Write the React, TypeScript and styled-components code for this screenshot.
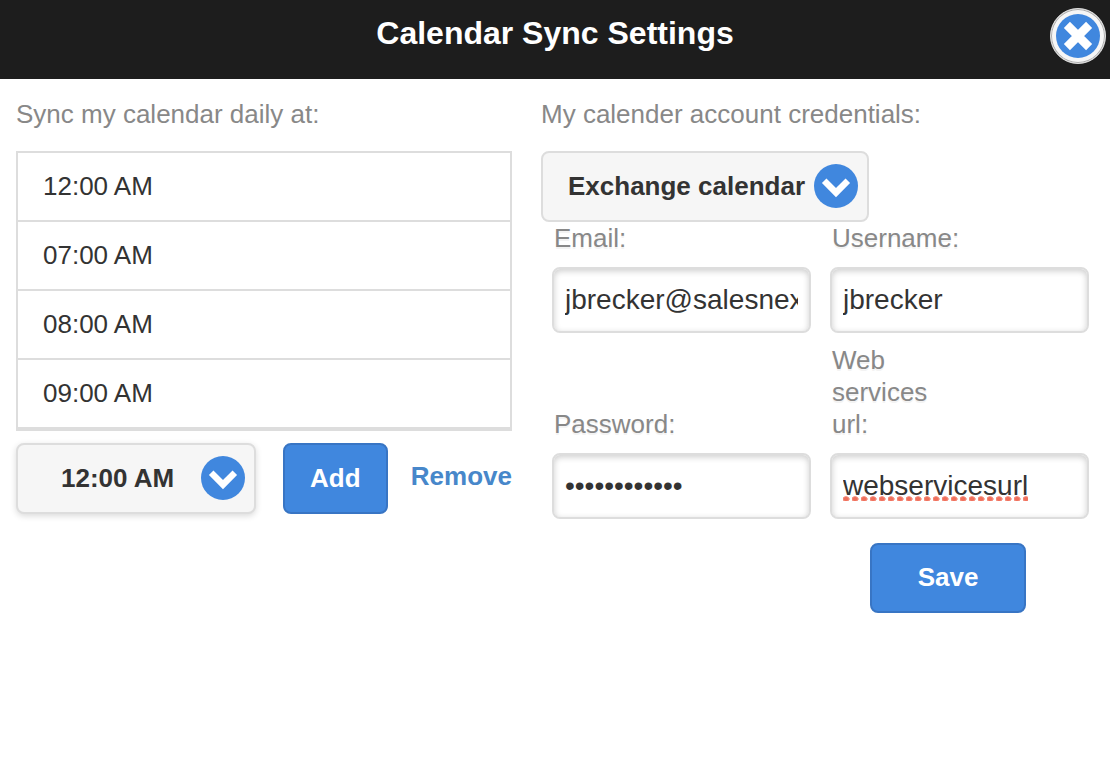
import React, { useState } from "react";
import styled, { createGlobalStyle } from "styled-components";

const GlobalStyle = createGlobalStyle`
  *, *::before, *::after { box-sizing: border-box; }
  body {
    margin: 0;
    background: #fff;
    color: #333;
    font-family: "Liberation Sans", Helvetica, Arial, sans-serif;
    font-size: 26px;
    line-height: 32px;
  }
  button, input, select { font: inherit; color: inherit; margin: 0; }
`;

const Header = styled.header`
  display: grid;
  grid-template-columns: 1fr auto 1fr;
  align-items: start;
  padding: 8px 4px 15px;
  background: #1d1d1d;
`;

const Title = styled.h1`
  grid-column: 2;
  margin: 0;
  padding-top: 5px;
  color: #fff;
  font-size: 32px;
  line-height: 40px;
  font-weight: bold;
`;

const CloseButton = styled.button`
  justify-self: end;
  width: 56px;
  height: 56px;
  padding: 4px;
  border: 1px solid #ddd;
  border-radius: 50%;
  background: #f6f6f6;
  box-shadow: inset 0 0 0 1px #aaa;
  cursor: pointer;

  svg { display: block; margin: 0 auto; }
`;

const Columns = styled.main`
  display: grid;
  grid-template-columns: minmax(0, 496fr) minmax(0, 548fr);
  column-gap: 29px;
  padding: 19px 21px 24px 16px;
`;

const Column = styled.section`
  min-width: 0;
`;

const ColumnTitle = styled.h2`
  margin: 0 0 21px;
  color: #888;
  font-size: 26px;
  line-height: 32px;
  font-weight: normal;
`;

const TimeList = styled.ul`
  margin: 0;
  padding: 0;
  list-style: none;
  border: 2px solid #ddd;
  border-top: 0;
`;

const TimeItem = styled.li`
  border-top: 2px solid #ddd;

  &:last-child { border-bottom: 2px solid #ddd; }
`;

const TimeButton = styled.button`
  display: block;
  width: 100%;
  height: 67px;
  padding: 0 25px 2px;
  border: 0;
  background: #fff;
  text-align: left;
  cursor: pointer;
`;

const Actions = styled.div`
  display: flex;
  align-items: center;
  margin-top: 12px;
`;

const SelectBox = styled.div<{ $width: number }>`
  position: relative;
  width: ${(p) => p.$width}px;
  max-width: 100%;

  svg {
    position: absolute;
    top: 13px;
    right: 11px;
    pointer-events: none;
  }
`;

const Select = styled.select<{ $indent: number; $raised?: boolean }>`
  display: block;
  appearance: none;
  width: 100%;
  height: 71px;
  padding: 0 56px 2px ${(p) => p.$indent}px;
  border: 2px solid #ddd;
  border-radius: 8px;
  background: #f6f6f6;
  box-shadow: ${(p) => (p.$raised ? "0 2px 6px rgba(0, 0, 0, 0.15)" : "none")};
  font-weight: bold;
`;

const PrimaryButton = styled.button`
  height: 71px;
  padding: 0 25px 2px;
  border: 2px solid #3875c4;
  border-radius: 8px;
  background: #4087de;
  color: #fff;
  font-weight: bold;
  cursor: pointer;
`;

const AddButton = styled(PrimaryButton)`
  margin-left: 27px;
`;

const SaveButton = styled(PrimaryButton)`
  height: 70px;
  width: 156px;
  margin: 24px 0 0 40px;
`;

const RemoveLink = styled.a`
  margin-left: auto;
  padding-bottom: 6px;
  color: #4787ca;
  font-weight: bold;
  text-decoration: none;
`;

const Form = styled.form`
  display: grid;
  grid-template-columns: repeat(2, minmax(0, 1fr));
  column-gap: 19px;
  padding-left: 11px;
`;

const Field = styled.div`
  display: flex;
  flex-direction: column;
  justify-content: flex-end;
  margin-bottom: 11px;

  &:nth-of-type(n + 3) { margin-bottom: 0; }
`;

const Label = styled.label`
  max-width: 120px;
  margin-bottom: 13px;
  padding-left: 2px;
  color: #888;
  text-shadow: 0 2px 0 #f3f3f3;
`;

const InputBox = styled.div<{ $misspelled?: boolean }>`
  position: relative;

  &::after {
    content: ${(p) => (p.$misspelled ? '""' : "none")};
    position: absolute;
    left: 13px;
    top: 43px;
    width: 185px;
    height: 5px;
    background: radial-gradient(ellipse 4px 3px at 3px 3px, #f0705c 0 50%, #f6a497 85%, transparent 100%) 0 0 / 9px 5px repeat-x;
    pointer-events: none;
  }
`;

const Input = styled.input`
  display: block;
  width: 100%;
  height: 66px;
  padding: 0 11px;
  border: 2px solid #ddd;
  border-radius: 8px;
  background: #fff;
  box-shadow: inset 0 2px 6px rgba(0, 0, 0, 0.2);
  font-size: 28px;
`;

const Chevron = () => (
  <svg width="44" height="44" viewBox="0 0 44 44" aria-hidden="true">
    <circle cx="22" cy="22" r="22" fill="#4087de" />
    <path d="M10.2 16.8 22 28.6 33.8 16.8" fill="none" stroke="#fff" strokeWidth="6.4" />
  </svg>
);

const Cross = () => (
  <svg width="44" height="44" viewBox="0 0 44 44" aria-hidden="true">
    <circle cx="22" cy="22" r="22" fill="#4087de" />
    <path d="M10.9 10.9 33.1 33.1M33.1 10.9 10.9 33.1" fill="none" stroke="#fff" strokeWidth="8.6" />
  </svg>
);

const TIMES = ["12:00 AM", "07:00 AM", "08:00 AM", "09:00 AM"];

const FIELDS = [
  { id: "email", label: "Email:", value: "jbrecker@salesnexus.com", type: "text" },
  { id: "username", label: "Username:", value: "jbrecker", type: "text" },
  { id: "password", label: "Password:", value: "abcdefghijkl", type: "password" },
  { id: "url", label: "Web services url:", value: "webservicesurl", type: "text", misspelled: true },
];

export default function App() {
  const [times, setTimes] = useState(TIMES);
  const [selected, setSelected] = useState<string | null>(null);
  const [time, setTime] = useState("12:00 AM");

  return (
    <>
      <GlobalStyle />
      <Header>
        <Title>Calendar Sync Settings</Title>
        <CloseButton type="button" aria-label="Close">
          <Cross />
        </CloseButton>
      </Header>
      <Columns>
        <Column>
          <ColumnTitle>Sync my calendar daily at:</ColumnTitle>
          <TimeList>
            {times.map((t) => (
              <TimeItem key={t}>
                <TimeButton type="button" aria-pressed={selected === t} onClick={() => setSelected(t)}>
                  {t}
                </TimeButton>
              </TimeItem>
            ))}
          </TimeList>
          <Actions>
            <SelectBox $width={240}>
              <Select
                $indent={43}
                $raised
                aria-label="Sync time"
                value={time}
                onChange={(e) => setTime(e.target.value)}
              >
                {TIMES.map((t) => (
                  <option key={t}>{t}</option>
                ))}
              </Select>
              <Chevron />
            </SelectBox>
            <AddButton
              type="button"
              onClick={() => setTimes((list) => (list.includes(time) ? list : [...list, time]))}
            >
              Add
            </AddButton>
            <RemoveLink
              href="#remove"
              onClick={(e) => {
                e.preventDefault();
                setTimes((list) => list.filter((t) => t !== selected));
              }}
            >
              Remove
            </RemoveLink>
          </Actions>
        </Column>
        <Column>
          <ColumnTitle>
            <label htmlFor="account">My calender account credentials:</label>
          </ColumnTitle>
          <SelectBox $width={328}>
            <Select id="account" $indent={25}>
              <option>Exchange calendar</option>
            </Select>
            <Chevron />
          </SelectBox>
          <Form onSubmit={(e) => e.preventDefault()}>
            {FIELDS.map((f) => (
              <Field key={f.id}>
                <Label htmlFor={f.id}>{f.label}</Label>
                <InputBox $misspelled={f.misspelled}>
                  <Input id={f.id} type={f.type} defaultValue={f.value} autoComplete="off" />
                </InputBox>
              </Field>
            ))}
            <div />
            <SaveButton type="submit">Save</SaveButton>
          </Form>
        </Column>
      </Columns>
    </>
  );
}
